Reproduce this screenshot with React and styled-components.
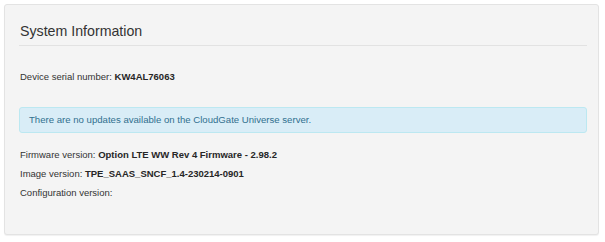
import React from 'react';
import styled, { createGlobalStyle } from 'styled-components';

const GlobalStyle = createGlobalStyle`
    html, body {
        margin: 0;
        padding: 0;
        background: #ffffff;
    }
    body {
        font-family: "Liberation Sans", Arial, sans-serif;
        color: #333333;
    }
`;

const Well = styled.section`
    margin: 4px;
    width: 595px;
    height: 231px;
    box-sizing: border-box;
    padding: 17px 11px 0 14px;
    background: #f4f4f4;
    border: 1px solid #e3e3e3;
    border-radius: 3px;
    box-shadow: 0 1px 1px rgba(0, 0, 0, 0.06);
`;

const Title = styled.h3`
    margin: 0;
    padding: 0 0 5px 1px;
    font-size: 14.2px;
    line-height: 18px;
    font-weight: normal;
    color: #333333;
    border-bottom: 1px solid #e2e2e2;
`;

const Line = styled.p`
    margin: ${(p) => p.$top || 0}px 0 0 1px;
    font-size: 9.5px;
    line-height: ${(p) => p.$lh || 19}px;
    color: #333333;

    b {
        font-weight: bold;
        color: #262626;
    }
`;

const Alert = styled.div`
    margin-top: 23px;
    padding: 6px 9px 6px 9px;
    font-size: 9.6px;
    line-height: 12px;
    color: #31708f;
    background: #d9edf7;
    border: 1px solid #bce8f1;
    border-radius: 3px;
`;

const Details = styled.div`
    margin-top: 12px;
`;

const rows = [
    { label: 'Firmware version:', value: 'Option LTE WW Rev 4 Firmware - 2.98.2' },
    { label: 'Image version:', value: 'TPE_SAAS_SNCF_1.4-230214-0901' },
    { label: 'Configuration version:', value: '' },
];

export default function App() {
    return (
        <>
            <GlobalStyle />
            <Well>
                <Title>System Information</Title>
                <Line $top={24} $lh={14}>
                    Device serial number: <b>KW4AL76063</b>
                </Line>
                <Alert>There are no updates available on the CloudGate Universe server.</Alert>
                <Details>
                    {rows.map((r) => (
                        <Line key={r.label}>
                            {r.label} {r.value && <b>{r.value}</b>}
                        </Line>
                    ))}
                </Details>
            </Well>
        </>
    );
}
